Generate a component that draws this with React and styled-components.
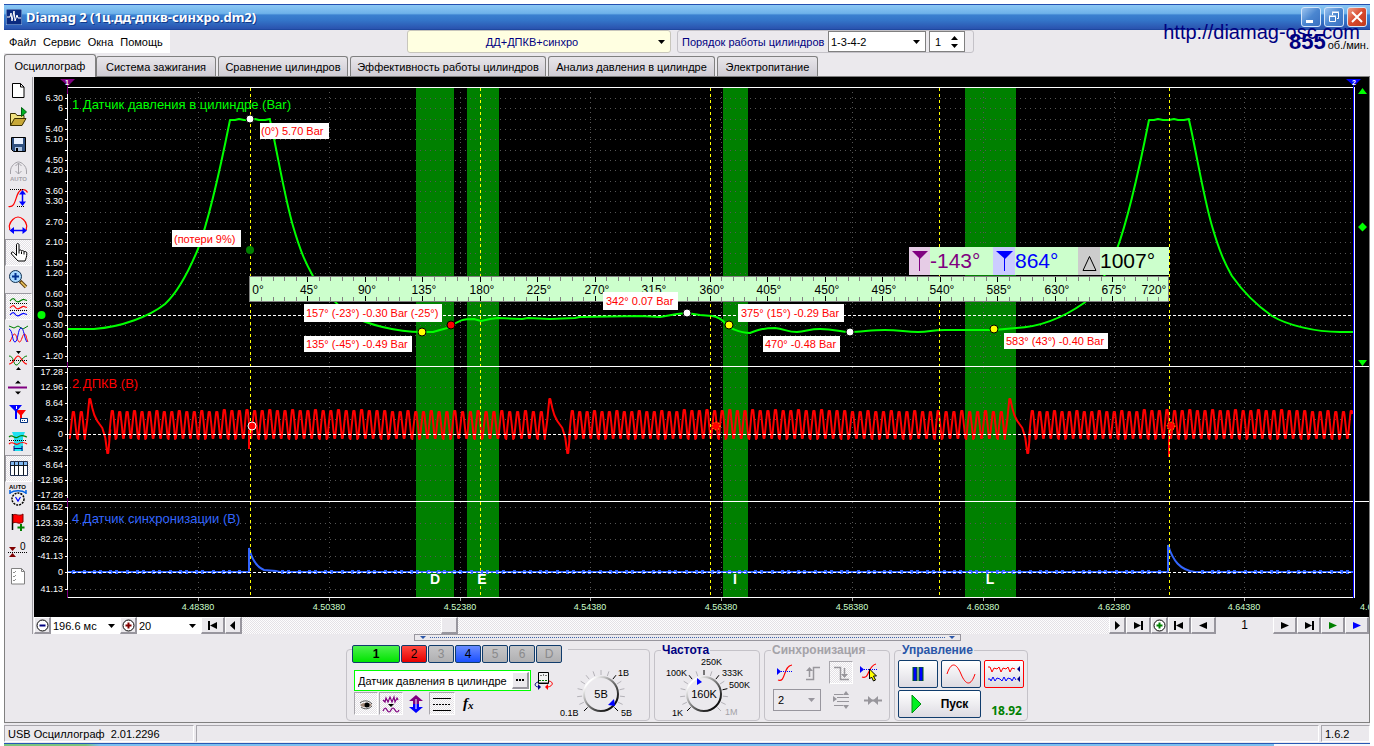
import React from 'react';
import styled, { createGlobalStyle, css } from 'styled-components';

const FACE = '#ebe9ed';
const hatch = css`
  background: repeating-conic-gradient(#e4e1e6 0% 25%, #fdfdfd 0% 50%) 0 0 / 2px 2px;
`;

const GlobalStyle = createGlobalStyle`
  * { box-sizing: border-box; }
  body {
    margin: 0;
    background: #fff;
    font-family: "Liberation Sans", Arial, sans-serif;
    font-size: 11px;
    color: #000;
  }
  button, select, input { font: inherit; color: inherit; margin: 0; }
  svg { display: block; flex: none; }
  svg text { font-family: "Liberation Sans", Arial, sans-serif; }
`;

/* ---------- window frame ---------- */

const Page = styled.div`
  position: relative;
  padding: 4px 4px 0;
  overflow: hidden;
`;

const TitleBar = styled.header`
  display: flex;
  align-items: center;
  height: 26px;
  padding: 0 3px 0 2px;
  border-top: 1px solid #2450b0;
  border-bottom: 1px solid #1e48a0;
  background: linear-gradient(#8cc8f4 0, #6eb2ea 35%, #3a80d0 42%, #3374c8 65%, #2a52ae 100%);
`;

const Title = styled.h1`
  flex: 1;
  margin: 0 0 0 4px;
  font: 700 13px "Noto Sans", sans-serif;
  line-height: 22px;
  white-space: nowrap;
  color: #fff;
  text-shadow: 1px 1px 0 #123a8c;
`;

const CaptionButton = styled.button`
  width: 20px;
  height: 20px;
  margin-left: 3px;
  padding: 0;
  border: 1px solid #d6e6fa;
  border-radius: 3px;
  background: ${(p) => (p.$close ? 'linear-gradient(135deg,#f0a08a,#d8482c 50%,#c03a1c)' : 'linear-gradient(135deg,#9cc4f0,#4a86d0 50%,#3a70c0)')};
`;

const SiteLink = styled.a`
  position: absolute;
  top: 21px;
  right: 14px;
  font-size: 20px;
  line-height: 22px;
  color: #000080;
  text-decoration: none;
`;

const HeaderRow = styled.div`
  display: flex;
  height: 24px;
  background: ${FACE};
`;

const Menu = styled.nav`
  display: flex;
  align-items: center;
  gap: 7px;
  width: 166px;
  height: 23px;
  padding-left: 5px;
  background: #fff;
`;

const MenuItem = styled.button`
  padding: 0;
  border: 0;
  background: none;
`;

const SelectBox = styled.div`
  position: relative;
  width: ${(p) => p.$w}px;
  height: ${(p) => p.$h || 22}px;
  flex: none;
  border: ${(p) => p.$border || '1px solid #808080'};
  border-radius: ${(p) => p.$radius || 0}px;
  background: ${(p) => p.$bg || '#fff'};
  select {
    appearance: none;
    width: 100%;
    height: 100%;
    padding: 0 16px 0 ${(p) => p.$pad || 2}px;
    border: 0;
    background: none;
    font-size: 11px;
    color: ${(p) => p.$color || '#000'};
    text-align: ${(p) => (p.$center ? 'center' : 'left')};
    text-align-last: ${(p) => (p.$center ? 'center' : 'left')};
  }
  svg {
    position: absolute;
    right: 5px;
    top: calc(50% - 2px);
    pointer-events: none;
  }
`;

const ModeSlot = styled.div`
  margin: 0 6px 0 237px;
`;

const OrderGroup = styled.div`
  display: flex;
  align-items: center;
  height: 23px;
  width: 297px;
  padding-left: 4px;
  border: 1px solid #c4c2c8;
  border-radius: 3px;
`;

const OrderLabel = styled.label`
  width: 146px;
  color: #000080;
  white-space: nowrap;
`;

const Spinner = styled.div`
  display: flex;
  align-items: center;
  width: 36px;
  height: 21px;
  margin-left: 3px;
  border: 1px solid #808080;
  background: #fff;
  input { width: 18px; padding: 0 0 0 5px; border: 0; background: none; outline: 0; }
`;

const Rpm = styled.div`
  display: flex;
  align-items: baseline;
  gap: 2px;
  margin-left: auto;
  padding-right: 1px;
  font-size: 11px;
  line-height: 24px;
  white-space: nowrap;
  b { font-size: 22px; color: #000080; }
`;

const Tabs = styled.div`
  display: flex;
  align-items: flex-end;
  gap: 2px;
  height: 23px;
  border-bottom: 1px solid #808080;
  background: ${FACE};
`;

const Tab = styled.button`
  height: ${(p) => (p.$active ? 23 : 20)}px;
  margin-bottom: ${(p) => (p.$active ? -1 : 0)}px;
  margin-right: ${(p) => (p.$active ? -2 : 0)}px;
  width: ${(p) => p.$w}px;
  padding: 0;
  border: 1px solid #808080;
  border-bottom: 0;
  border-radius: 3px 3px 0 0;
  white-space: nowrap;
  background: ${(p) => (p.$active ? FACE : 'linear-gradient(#e8e6ea, #cfccd4)')};
`;

/* ---------- main area ---------- */

const Workspace = styled.main`
  display: flex;
  background: ${FACE};
  border-left: 1px solid #808080;
  border-bottom: 1px solid #808080;
  border-right: 1px solid #808080;
`;

const ToolColumn = styled.div`
  display: flex;
  flex-direction: column;
  width: 29px;
  flex: none;
`;

const ToolList = styled.div`
  display: flex;
  flex-direction: column;
  height: 557px;
  border-right: 1px solid #a09ea4;
  margin-right: 1px;
`;

const ToolButton = styled.button`
  width: 27px;
  height: 27px;
  padding: 0;
  border: 1px solid transparent;
  background: none;
  ${(p) => p.$pressed && css`
    ${hatch}
    border-color: #9a98a0 #fff #fff #9a98a0;
  `}
  svg { margin: -1px; }
`;

const ChartColumn = styled.div`
  flex: 1;
  min-width: 0;
`;

const Chart = styled.svg`
  width: 100%;
  background: #000;
`;

const ScrollRow = styled.div`
  display: flex;
  height: 17px;
`;

const FlatButton = styled.button`
  display: flex;
  align-items: center;
  justify-content: center;
  flex: none;
  width: ${(p) => p.$w}px;
  height: 17px;
  padding: 0;
  border: 1px solid #fff;
  border-right: 2px solid #98969e;
  border-bottom: 2px solid #98969e;
  background: ${FACE};
`;

const Track = styled.div`
  flex: 1;
  ${hatch}
`;

const Thumb = styled.div`
  width: 17px;
  height: 17px;
  margin-left: 23%;
  border: 1px solid #fff;
  border-right: 2px solid #98969e;
  border-bottom: 2px solid #98969e;
  background: ${FACE};
`;

const PageNumber = styled.div`
  width: 57px;
  text-align: center;
  line-height: 17px;
  font-size: 12px;
`;

const LowerArea = styled.section`
  display: flex;
  flex-direction: column;
  align-items: center;
  height: 88px;
  margin-left: -29px;
`;

const Splitter = styled.div`
  display: flex;
  align-items: center;
  justify-content: space-between;
  width: 547px;
  height: 7px;
  padding: 0 5px;
  border: 1px solid #98969e;
  span { flex: 1; margin: 0 4px; border-top: 1px dotted #3a60a8; }
`;

const Panels = styled.div`
  display: flex;
  gap: 4px;
  padding-top: 3px;
`;

const Group = styled.fieldset`
  min-width: 0;
  width: ${(p) => p.$w}px;
  height: 77px;
  margin: 0;
  padding: 0;
  border: 1px solid #c4c2c8;
  border-radius: 4px;
`;

const Legend = styled.legend`
  height: 12px;
  margin-left: 6px;
  padding: 0 1px;
  font: 700 12px "Liberation Sans", Arial, sans-serif;
  line-height: 12px;
  color: ${(p) => p.$color};
`;

const ChannelGroup = styled.div`
  width: 304px;
  height: 72px;
  margin-top: 5px;
  border: 1px solid #c4c2c8;
  border-radius: 4px;
`;

const ChannelTabs = styled.div`
  display: flex;
  gap: 1px;
  width: 216px;
  margin: -5px 0 0 5px;
  background: ${FACE};
`;

const channelFill = {
  green: 'linear-gradient(#4ef04e, #00e400)',
  red: 'linear-gradient(#ff4a40, #e60000)',
  blue: 'linear-gradient(#6a8cff, #1a50ff)',
  off: 'linear-gradient(#c6c6c8, #b0b0b2)',
};

const ChannelButton = styled.button`
  width: ${(p) => (p.$wide ? 48 : 26)}px;
  height: 18px;
  padding: 0;
  border: 1px solid #103c6c;
  border-radius: 2px;
  background: ${(p) => channelFill[p.$tone]};
  font-size: 12px;
  font-weight: ${(p) => (p.$wide ? 700 : 400)};
  color: ${(p) => (p.$tone === 'off' ? '#8a8a8c' : '#000')};
`;

const ChannelBody = styled.div`
  display: flex;
`;

const ChannelLeft = styled.div`
  width: 208px;
  padding: 7px 0 0 7px;
`;

const Line = styled.div`
  display: flex;
  align-items: center;
  gap: ${(p) => p.$gap || 0}px;
  padding: ${(p) => p.$pad || 0};
`;

const SensorBox = styled.div`
  display: flex;
  align-items: center;
  width: 177px;
  height: 21px;
  border: 1px solid #00ff00;
  background: #fff;
  input { flex: 1; min-width: 0; padding: 0 3px; border: 0; background: none; outline: 0; }
`;

const DotsButton = styled.button`
  width: 17px;
  height: 17px;
  margin-right: 1px;
  padding: 0;
  border: 1px solid #fff;
  border-right: 2px solid #98969e;
  border-bottom: 2px solid #98969e;
  background: ${FACE};
  line-height: 8px;
  font-weight: 700;
  svg { margin: 0 auto; }
`;

const SmallTool = styled.button`
  width: ${(p) => p.$w || 24}px;
  height: 23px;
  padding: 0;
  border: 1px solid transparent;
  background: none;
  ${(p) => p.$pressed && css`
    ${hatch}
    border-color: #a8a6ac #fff #fff #a8a6ac;
  `}
  svg { margin: 0 auto; }
`;

const SyncGrid = styled.div`
  padding: 5px 4px 0 8px;
`;

const ControlGrid = styled.div`
  display: grid;
  grid-template-columns: 40px 40px 40px;
  grid-auto-rows: 28px;
  gap: 2px 3px;
  padding: 4px 0 0 3px;
`;

const ControlButton = styled.button`
  display: flex;
  align-items: center;
  justify-content: center;
  grid-column: span ${(p) => p.$span || 1};
  gap: 18px;
  padding: 0;
  border: 1px solid ${(p) => (p.$on ? '#ff0000' : '#103c6c')};
  border-radius: 2px;
  background: linear-gradient(#fff, #dddbe2);
  font-size: 12px;
  font-weight: 700;
`;

const Reading = styled.output`
  align-self: end;
  justify-self: end;
  padding-right: 2px;
  font: 700 12px "Noto Sans", sans-serif;
  line-height: 15px;
  color: #008000;
`;

const StatusBar = styled.footer`
  display: flex;
  gap: 2px;
  padding: 2px 0 1px;
  background: ${FACE};
`;

const StatusPane = styled.div`
  ${(p) => (p.$w ? `width: ${p.$w}px;` : 'flex: 1;')}
  height: 17px;
  padding-left: 3px;
  border: 1px solid #a8a6ac;
  border-right-color: #fff;
  border-bottom-color: #fff;
  line-height: 16px;
  white-space: pre;
`;

const TaskStrip = styled.div`
  height: 4px;
  border-top: 1px solid #2858b4;
  background: linear-gradient(90deg, #7cc47c 0 6%, #7cc0ef 7% 93%, #f4f8fc 93% 100%);
`;

/* ---------- glyphs ---------- */

const Caret = () => (
  <svg width="7" height="4" viewBox="0 0 7 4"><path d="M0 0h7L3.500 4z" fill="#000" /></svg>
);

const Ico = ({ children, s = 27, h }) => (
  <svg width={s} height={h || s} viewBox={`0 0 ${s} ${h || s}`} fill="none" strokeWidth="1">{children}</svg>
);

const wave = (y, c) => <path d={`M5 ${y}q3-4 5-1t5 1t4-1.500t3 1`} stroke={c} strokeWidth="1.200" />;

const tools = [
  ['Новый', <Ico><path d="M7.500 6.500h8l3.500 3.500v10.500H7.500z" fill="#fff" stroke="#000" /><path d="M15.500 6.500v3.500h3.500" stroke="#000" /></Ico>],
  ['Открыть', <Ico><path d="M5.500 21.500V9.500h5l1.500 2h7v3" fill="#f0e080" stroke="#3c3000" /><path d="M5.500 21.500l4-7h11.500l-4 7z" fill="#c8a838" stroke="#3c3000" /><path d="M16.500 3.500v9l5-4.500z" fill="#00b020" stroke="#006010" /></Ico>],
  ['Сохранить', <Ico><path d="M6.500 6.500h14v14h-12l-2-2z" fill="#305080" stroke="#000" /><path d="M9 7h9v6H9z" fill="#e8f0ff" /><path d="M10 16h7v4h-7z" fill="#a8c0e0" /><path d="M11 17h2v3h-2z" fill="#000" /></Ico>],
  ['Автомасштаб', <Ico><path d="M5.500 16v-3c0-5 5-9 8-9s8 4 8 9v3M13.500 5v11M10.500 8l3-3 3 3M10.500 13l3 3 3-3" stroke="#a4a2a8" /><text x="5" y="23" fontSize="6" fontWeight="700" fill="#a4a2a8">AUTO</text></Ico>],
  ['Масштаб по вертикали', <Ico><path d="M3.500 21.500c9 2 6-16 14-17 2 0 4 1 5 3" stroke="#f00" strokeWidth="1.200" /><path d="M5 4.500h13M12 21.500h8" stroke="#000" strokeDasharray="1 1" /><path d="M17.500 8v10" stroke="#00f" strokeWidth="1.500" /><path d="M17.500 5l3.500 4.500h-7zM17.500 21l3.500-4.500h-7z" fill="#00f" /></Ico>],
  ['Масштаб по горизонтали', <Ico><path d="M4.500 18c1-2-1-3 0-5 1-4 5-8 8.500-8s8 4 8.500 8c1 2-1 3 0 5" stroke="#f00" strokeWidth="1.200" /><path d="M8 18.500h11" stroke="#00f" strokeWidth="1.500" /><path d="M4.500 18.500l4.500-3.500v7zM22 18.500l-4.500-3.500v7z" fill="#00f" /></Ico>],
  ['Рука', <Ico><path d="M11.500 16.500V6c0-2 2.500-2 2.500 0v5.500c1-1 2.500-.500 2.500.500 1-.800 2.500-.300 2.500.800 1-.600 2.800-.200 2.800 1.400 0 3.500-.800 5.300-1.800 7.800h-7L6.500 15c-1-1.500 1-2.700 2.200-1.500z" fill="#fff" stroke="#000" /><path d="M14 11.500v3M16.500 12.500v2.500M19 13v2.500" stroke="#000" /></Ico>, true],
  ['Лупа', <Ico><path d="M15 15l6 6" stroke="#604010" strokeWidth="3.500" /><path d="M16 16l5 5" stroke="#f0c860" strokeWidth="1.500" /><circle cx="10.500" cy="10.500" r="6" fill="#a8d8ff" stroke="#103050" /><path d="M10.500 7v7M7 10.500h7" stroke="#003090" strokeWidth="2" /></Ico>],
  ['Раздельно', <Ico>{wave(8, '#008000')}<path d="M5 10.500h17M5 17.500h17" stroke="#000" strokeDasharray="1 1" />{wave(15, '#f00')}{wave(22, '#00f')}</Ico>, true],
  ['Совместно', <Ico><path d="M4 6l5 2 4-2 5 3 5-3" stroke="#008000" /><path d="M4.500 22c2-2 3-8 5-8s3 8 5 8 3-8 5-8 2 6 3.500 8" stroke="#f00" /><path d="M4 9c4 1 3 13 6 13s3-14 6-14 3 10 6 14" stroke="#00f" /></Ico>],
  ['Сдвиг', <Ico><path d="M4 9c5 0 4 8 7 9s6-9 11-9" stroke="#008000" /><path d="M4 17c5 0 6-8 9-8s5 8 9 8" stroke="#f00" strokeWidth="1.200" /><path d="M5 13.500h17" stroke="#000" strokeDasharray="1 1" /><path d="M11 4h5l-2.500 3zM11 23h5l-2.500-3z" fill="#000" /></Ico>],
  ['Уровень', <Ico><path d="M3 13.500h19" stroke="#800080" strokeWidth="2" /><path d="M10 9.500h6l-3-3zM10 17.500h6l-3 3z" fill="#000" /></Ico>],
  ['Маркеры', <Ico><path d="M10 9h11l-4 5v5h-2v-5z" fill="#f00" /><path d="M4 4h13l-5 6v8h-2v-8z" fill="#00f" /><path d="M15.500 17.500h7v4h-7z" fill="#fff" stroke="#003080" /><path d="M17 19.500h4" stroke="#003080" strokeDasharray="1 1" /><path d="M11.500 5v3" stroke="#fff" /></Ico>],
  ['Интервал', <Ico><path d="M7 4h13l-2 5v14H9V9z" fill="#20e0f0" /><path d="M4 9c4-4 5 3 9 0s6-1 9 0" stroke="#008000" strokeWidth="1.200" /><path d="M4 16c4-4 6 2 9 0s6-2 9 0" stroke="#f00" strokeWidth="1.200" /><path d="M4 12.500h18" stroke="#000" strokeDasharray="1 1" /><path d="M9 20.500h8M9 18v5M17 18v5" stroke="#001080" /></Ico>],
  ['Таблица', <Ico><path d="M5.500 6.500h17v14h-17z" fill="#fff" stroke="#203050" /><path d="M6 7h16v3H6z" fill="#80b8f0" /><path d="M5 10.500h18M9.500 7v13M13.500 7v13M18.500 7v13" stroke="#101820" /></Ico>, true],
  ['Авто', <Ico><text x="4" y="7" fontSize="6" fontWeight="700" fill="#000">AUTO</text><path d="M5 11c4-3 12-3 16 0M5 12V8M21 12V8" stroke="#0060e0" strokeWidth="1.500" /><circle cx="13" cy="17" r="6" fill="#eee" stroke="#000" strokeWidth="1.500" strokeDasharray="2 1" /><path d="M10.500 15l2.500 4 2.500-4" stroke="#00f" strokeWidth="1.200" /></Ico>],
  ['Флаг', <Ico><path d="M7.500 5v16" stroke="#000" strokeWidth="1.500" /><path d="M8 6c3-2 6 2 10-1v8c-4 3-7-1-10 1z" fill="#f00" stroke="#800000" /><path d="M16 15v7M12.500 18.500h7" stroke="#008000" strokeWidth="2" /></Ico>],
  ['Ноль', <Ico><path d="M4 11h7l-3.500 4zM4 21h7l-3.500-4z" fill="#800000" /><path d="M3 16.500h19" stroke="#000" strokeDasharray="1 1" /><text x="15" y="14" fontSize="10" fill="#000">0</text></Ico>],
  ['Список', <Ico><path d="M6.500 5.500h10l3 3v12.500h-13z" fill="#fff" stroke="#808080" /><path d="M8 9l1 1 2-2M8 13l1 1 2-2M8 17l1 1 2-2" stroke="#909090" /><path d="M16.500 5.500v3h3" stroke="#808080" /></Ico>],
];

const arrows = {
  right: 'M5 0l5 4.500-5 4.500z',
  left: 'M9 0L4 4.500 9 9z',
  end: 'M3 1l7 3.500L3 8zM10 0h2v9h-2z',
  start: 'M2 0h2v9H2zM11 1L4 4.500 11 8z',
  play: 'M3 1l8 3.500L3 8z',
  back: 'M11 1L3 4.500 11 8z',
};
const Arrow = ({ kind, fill = '#000' }) => (
  <svg width="14" height="9" viewBox="0 0 14 9"><path d={arrows[kind]} fill={fill} /></svg>
);
const Round = ({ plus, color }) => (
  <svg width="13" height="13" viewBox="0 0 13 13">
    <circle cx="6.500" cy="6.500" r="5.500" fill="#fff" stroke="#000" />
    <path d={plus ? 'M3.500 6.500h6M6.500 3.500v6' : 'M3.500 6.500h6'} stroke={color} strokeWidth="2" />
  </svg>
);

/* ---------- chart ---------- */

const LEFT = 68;
const RIGHT = 1353;
const bands = [[416, 38, 'D', 435], [467, 32, 'E', 482], [723, 25, 'I', 735], [965, 51, 'L', 990]];
const cursors = [250, 480, 710, 939, 1169];
const seconds = ['4.48380', '4.50380', '4.52380', '4.54380', '4.56380', '4.58380', '4.60380', '4.62380', '4.64380'];

const pressureLabels = [
  '6.30', '6', '', '5.40', '5.10', '', '4.50', '4.20', '', '3.60', '3.30', '', '2.70',
  '', '2.10', '', '1.50', '1.20', '', '0.60', '0.30', '0', '-0.30', '-0.60', '', '-1.20',
];
const pressureTicks = pressureLabels.map((label, i) => [Math.round(98 + i * 10.32), label]);
const crankTicks = [[372, '17.28'], [387, '12.96'], [403, '8.64'], [419, '4.32'], [434, '0'], [449, '-4.32'], [465, '-8.64'], [480, '-12.96'], [495, '-17.28']];
const syncTicks = [[507, '164.52'], [523, '123.39'], [539, '-82.26'], [556, '-41.13'], [572, '0'], [589, '41.13']];
const ticks = [...pressureTicks, ...crankTicks, ...syncTicks];

const riseFall = (o) =>
  `C${o + 178} 292 ${o + 188} 273 ${o + 198} 249 C${o + 208} 222 ${o + 221} 165 ${o + 230} 120 h5 l4-1 5 1 h6 l5-1 4 1 h6 l5-1 v1 C${o + 277} 150 ${o + 284} 195 ${o + 293} 226 S${o + 308} 267 ${o + 313} 276`;
const pressurePath =
  `M68 329H94C122 327 150 316 165 304 ${riseFall(0)}
   C320 286 332 302 352 316 C367 324 395 332 422 332 H433 L440 330 451 327 C458 320 464 319 474 319
   L481 321 490 319 498 318 522 319 528 318 550 319 575 318 580 317 640 316 660 317 677 314 687 313 700 315 712 316
   C724 317 726 327 733 329 C738 331 742 333 750 333 C758 330 763 328 775 328 C785 329 787 332 797 332
   C807 331 810 329 820 329 C835 329 840 332 850 332 C862 332 870 330 885 330 S905 332 918 332 930 330 945 330
   H994 L1016 328 C1040 327 1064 317 1084 303 ${riseFall(919)}
   C1239 286 1252 302 1272 316 C1287 325 1315 332 1340 332 H1353`;

function crankPath() {
  const pts = [];
  const tooth = (x, p, k) => {
    const top = 412 - (k % 3 === 0 ? 1 : 0) - (k > 14 && k < 36 ? 1 : 0);
    const bottom = 438 + (k % 4 === 0 ? 1 : 0);
    pts.push([x - p / 2 + 0.5, bottom], [x - 2.4, 428], [x - 1, top + 3], [x - 0.6, top], [x + 0.6, top], [x + 1, top + 3], [x + 2.4, 428], [x + p / 2 - 0.5, bottom]);
  };
  for (const s of [-369.7, 90.3, 550.3, 1010.3]) {
    pts.push([s - 3, 420], [s - 1, 399], [s, 399], [s + 2, 408], [s + 4, 415], [s + 7, 421], [s + 12, 428], [s + 15, 438], [s + 17, 453], [s + 18, 453], [s + 20, 430]);
    for (let n = 0; n <= 56; n += 1) {
      const x = s + 22 + 7.4 * n + 0.00466 * n * n;
      tooth(x, 7.4 + 0.0093 * n, n);
    }
  }
  return 'M' + pts.filter(([x]) => x >= LEFT && x <= RIGHT).map(([x, y]) => `${x.toFixed(1)} ${y}`).join('L');
}

const syncPath = 'M68 572H249V548C252 560 257 567 264 570L276 571 280 572H1168V545C1173 561 1180 570 1195 572H1353';
const noise = Array.from({ length: 150 }, (_, i) => 72 + i * 8.6 + ((i * 37) % 5)).filter((x) => x < RIGHT - 3 && Math.abs(x - 260) > 16 && Math.abs(x - 1180) > 20);

const notes = [
  [260, 123, 69, 16, '(0°) 5.70 Bar', 261],
  [172, 230, 69, 17, '(потери 9%)', 174],
  [304, 304, 138, 18, '157° (-23°) -0.30 Bar (-25°)', 306],
  [304, 336, 108, 16, '135° (-45°) -0.49 Bar', 306],
  [603, 292, 75, 18, '342° 0.07 Bar', 606],
  [738, 304, 106, 18, '375° (15°) -0.29 Bar', 741],
  [763, 336, 77, 16, '470° -0.48 Bar', 765],
  [1004, 333, 104, 16, '583° (43°) -0.40 Bar', 1006],
];
const dots = [[250, 119, '#fff'], [250, 250, '#008000'], [422, 332, '#ff0'], [451, 325, '#f00'], [687, 313, '#fff'], [729, 325, '#ff0'], [850, 332, '#fff'], [994, 329, '#ff0']];

function Scope() {
  const major = Array.from({ length: 17 }, (_, i) => i * 45);
  return (
    <Chart viewBox="34 77 1335 540" role="img" aria-label="Осциллограмма" fill="none">
      {bands.map(([x, w]) => <rect key={x} x={x} y="88" width={w} height="509" fill="#008000" />)}
      <g stroke="#555" strokeDasharray="1 4">
        {ticks.map(([y]) => <path key={y} d={`M70 ${y + 0.5}H${RIGHT}`} />)}
        {seconds.map((s, i) => <path key={s} d={`M${Math.round(198 + i * 130.8) + 0.5} 92V597`} />)}
      </g>
      <path d="M68 315.500H1353" stroke="#fff" strokeDasharray="3 2" />
      <path d={pressurePath} stroke="#00ff00" strokeWidth="2" strokeLinejoin="round" />
      <path d={crankPath()} stroke="#ff0000" strokeWidth="2" strokeLinejoin="round" />
      <path d="M249 430V449M1169 430V457" stroke="#ff0000" strokeWidth="2" />
      <path d={syncPath} stroke="#3366ff" strokeWidth="2" />
      <path d={noise.map((x) => `M${x.toFixed(0)} 572h3`).join('')} stroke="#3366ff" strokeWidth="4" />
      <path d="M68 434.500H1353M68 572.500H1353" stroke="#fff" strokeDasharray="3 2" />
      <path d={cursors.map((x) => `M${x + 0.5} 88V597`).join('')} stroke="#ffff00" strokeDasharray="3 3" />
      <path d="M68 87.500H1354M34 366.500H1369M34 501.500H1369M68 597.500H1354M67.500 88V598M1354.500 87V598" stroke="#fff" />
      <path d="M1353.500 84V598" stroke="#0000ff" />
      <path d="M67.500 84V94M67.500 362V368M67.500 498V508M67.500 590V598" stroke="#800080" />
      <path d={ticks.map(([y]) => `M65 ${y + 0.5}h3`).join('')} stroke="#fff" />
      <path d={seconds.map((_, i) => `M${Math.round(198 + i * 130.8) + 0.5} 598v3`).join('')} stroke="#aaa" />
      <g fill="#fff" fontSize="9" textAnchor="end">
        {ticks.filter(([, t]) => t).map(([y, t]) => <text key={y} x="63" y={y + 3}>{t}</text>)}
      </g>
      <g fill="#ccffcc" fontSize="9" textAnchor="middle">
        {seconds.map((s, i) => <text key={s} x={Math.round(198 + i * 130.8)} y="610">{s}</text>)}
        <text x="1360" y="610" textAnchor="start">4.66380</text>
      </g>
      <g fontSize="13">
        <text x="72" y="109" fill="#00ff00">1 Датчик давления в цилиндре (Bar)</text>
        <text x="72" y="388" fill="#ff0000">2 ДПКВ (В)</text>
        <text x="72" y="523" fill="#3366ff">4 Датчик синхронизации (В)</text>
      </g>
      <g fill="#fff" fontSize="14" fontWeight="700" textAnchor="middle">
        {bands.map(([x, , t, cx]) => <text key={x} x={cx} y="584">{t}</text>)}
      </g>

      <rect x="909" y="247" width="260" height="28" fill="#ccffcc" />
      <rect x="909" y="247" width="21" height="28" fill="#e6cce6" />
      <rect x="993" y="247" width="22" height="28" fill="#ccccff" />
      <rect x="1078" y="247" width="22" height="28" fill="#cccccc" />
      <path d="M912 251h16l-8 8z" fill="#800080" />
      <path d="M919.500 256V271" stroke="#800080" />
      <path d="M996 251h17l-8 8z" fill="#0000ff" />
      <path d="M1004.500 256V271" stroke="#0000ff" />
      <path d="M1089.500 256.500l6.500 14h-13z" stroke="#000" />
      <g fontSize="21">
        <text x="930" y="268" fill="#800080">-143°</text>
        <text x="1015" y="268" fill="#0000ff">864°</text>
        <text x="1100" y="268" fill="#000">1007°</text>
      </g>

      <rect x="249.500" y="276.500" width="919" height="25" fill="#ccffcc" stroke="#808080" />
      <path
        d={Array.from({ length: 79 }, (_, i) => `M${Math.round(261 + i * 11.5) + 0.5} 277v4m0 16v4`).join('')}
        stroke="#808080"
      />
      <path d={major.slice(1, 16).map((d) => `M${Math.round(250 + d * 1.277) + 0.5} 277v5m0 14v5`).join('')} stroke="#000" />
      <g fill="#000" fontSize="12" textAnchor="middle">
        {major.map((d) => (
          <text key={d} x={d === 0 ? 258 : d === 720 ? 1154 : Math.round(252 + d * 1.277)} y="294">{d}°</text>
        ))}
      </g>

      {notes.map(([x, y, w, h, t, tx]) => (
        <g key={t}>
          <rect x={x} y={y} width={w} height={h} fill="#fff" />
          <text x={tx} y={y + h / 2 + 4} fontSize="11" fill="#ff0000">{t}</text>
        </g>
      ))}
      {dots.map(([x, y, c]) => <circle key={`${x}-${y}`} cx={x} cy={y} r="4" fill={c} stroke="#000" strokeWidth={c === '#008000' ? 0 : 1} />)}
      <circle cx="252" cy="426" r="4" fill="#f00" stroke="#fff" />
      <circle cx="716" cy="426" r="4" fill="#f00" stroke="#ff0" strokeDasharray="1 2" />
      <circle cx="1171" cy="426" r="4" fill="#f00" stroke="#ff0" strokeDasharray="1 2" />
      <circle cx="41.500" cy="315" r="4" fill="#0f0" />
      <path d="M60 79h15l-7 7z" fill="#800080" />
      <path d="M1346 79h15l-7 7z" fill="#0000ff" />
      <g fill="#fff" fontSize="7" fontWeight="700" textAnchor="middle">
        <text x="67" y="85">1</text>
        <text x="1354" y="85">2</text>
      </g>
      <path d="M1358 94h9l-4.500-6zM1358 360h9l-4.500 6zM1358 227l4.500-4.500 4.500 4.500-4.500 4.500z" fill="#0f0" />
    </Chart>
  );
}

/* ---------- knobs ---------- */

const Knob = ({ cx, cy, value, labels, marks, pointer, width, height, id }) => (
  <svg width={width} height={height} viewBox={`0 0 ${width} ${height}`} fill="none">
    <defs>
      <linearGradient id={id} x1="0" y1="0" x2="1" y2="1">
        <stop offset=".15" stopColor="#fff" />
        <stop offset=".5" stopColor="#777" />
        <stop offset=".9" stopColor="#000" />
      </linearGradient>
    </defs>
    {Array.from({ length: 15 }, (_, i) => {
      const a = ((-225 + (270 / 14) * i) * Math.PI) / 180;
      const black = marks.includes(i);
      return <path key={i} d={`M${cx + 19 * Math.cos(a)} ${cy + 19 * Math.sin(a)}L${cx + 24 * Math.cos(a)} ${cy + 24 * Math.sin(a)}`} stroke={black ? '#000' : '#b4b2b8'} />;
    })}
    <circle cx={cx} cy={cy} r="17" fill="#ebe9ed" stroke={`url(#${id})`} strokeWidth="2" />
    <path d={pointer} fill="#0000ff" />
    <text x={cx} y={cy + 4} fontSize="11" fill="#000" textAnchor="middle">{value}</text>
    {labels.map(([x, y, t, c]) => <text key={t} x={x} y={y} fontSize="9" fill={c || '#000'}>{t}</text>)}
  </svg>
);

export default function App() {
  return (
    <Page>
      <GlobalStyle />
      <TitleBar>
        <svg width="16" height="16" viewBox="0 0 16 16" fill="none">
          <rect width="16" height="16" fill="#0a2a80" stroke="#a0c8f0" />
          <path d="M1 8h3l1-4 1 8 2-10 1 10 2-6 1 3h3" stroke="#fff" />
        </svg>
        <Title>Diamag 2 (1ц.дд-дпкв-синхро.dm2)</Title>
        <CaptionButton aria-label="Свернуть"><svg width="18" height="18"><path d="M4 12h7v3H4z" fill="#fff" /></svg></CaptionButton>
        <CaptionButton aria-label="Восстановить"><svg width="18" height="18" fill="none" stroke="#fff"><path d="M4.500 8.500h6v5h-6zM4 8h7M7.500 7V4.500h6v6H12M7 4h7" /></svg></CaptionButton>
        <CaptionButton $close aria-label="Закрыть"><svg width="18" height="18" stroke="#fff" strokeWidth="2"><path d="M4 4l10 10M14 4L4 14" /></svg></CaptionButton>
      </TitleBar>

      <HeaderRow>
        <Menu>
          {['Файл', 'Сервис', 'Окна', 'Помощь'].map((m) => <MenuItem key={m}>{m}</MenuItem>)}
        </Menu>
        <ModeSlot>
          <SelectBox $w={264} $h={23} $bg="#ffffe1" $border="1px solid #c8c6bc" $radius={3} $color="#000080" $center>
            <select aria-label="Режим"><option>ДД+ДПКВ+синхро</option></select>
            <Caret />
          </SelectBox>
        </ModeSlot>
        <OrderGroup>
          <OrderLabel htmlFor="order">Порядок работы цилиндров</OrderLabel>
          <SelectBox $w={98} $h={21}>
            <select id="order"><option>1-3-4-2</option></select>
            <Caret />
          </SelectBox>
          <Spinner>
            <input aria-label="Цилиндр" defaultValue="1" />
            <svg width="14" height="14" viewBox="0 0 14 14"><path d="M3 5h7L6.500 1zM3 9h7l-3.500 4z" fill="#000" /></svg>
          </Spinner>
        </OrderGroup>
        <Rpm><b>855</b> об./мин.</Rpm>
      </HeaderRow>

      <Tabs role="tablist">
        <Tab role="tab" $active $w={92}>Осциллограф</Tab>
        <Tab role="tab" $w={120}>Система зажигания</Tab>
        <Tab role="tab" $w={130}>Сравнение цилиндров</Tab>
        <Tab role="tab" $w={196}>Эффективность работы цилиндров</Tab>
        <Tab role="tab" $w={167}>Анализ давления в цилиндре</Tab>
        <Tab role="tab" $w={101}>Электропитание</Tab>
      </Tabs>

      <Workspace>
        <ToolColumn>
          <ToolList>
            {tools.map(([name, icon, pressed]) => <ToolButton key={name} aria-label={name} $pressed={pressed}>{icon}</ToolButton>)}
          </ToolList>
        </ToolColumn>
        <ChartColumn>
          <Scope />
          <ScrollRow>
            <FlatButton $w={17} aria-label="Уменьшить"><Round color="#000080" /></FlatButton>
            <SelectBox $w={69} $h={17} $border="0">
              <select aria-label="Развёртка"><option>196.6 мс</option></select>
              <Caret />
            </SelectBox>
            <FlatButton $w={17} aria-label="Увеличить"><Round plus color="#800000" /></FlatButton>
            <SelectBox $w={64} $h={17} $border="0">
              <select aria-label="Шаг"><option>20</option></select>
              <Caret />
            </SelectBox>
            <FlatButton $w={24} aria-label="В начало"><Arrow kind="start" /></FlatButton>
            <FlatButton $w={17} aria-label="Влево"><Arrow kind="left" /></FlatButton>
            <Track><Thumb /></Track>
            <FlatButton $w={17} aria-label="Вправо"><Arrow kind="right" /></FlatButton>
            <FlatButton $w={25} aria-label="В конец"><Arrow kind="end" /></FlatButton>
            <FlatButton $w={17} aria-label="Добавить"><Round plus color="#008000" /></FlatButton>
            <FlatButton $w={23} aria-label="Первый кадр"><Arrow kind="start" /></FlatButton>
            <FlatButton $w={25} aria-label="Предыдущий"><Arrow kind="back" /></FlatButton>
            <PageNumber>1</PageNumber>
            <FlatButton $w={24} aria-label="Следующий"><Arrow kind="play" /></FlatButton>
            <FlatButton $w={24} aria-label="Последний кадр"><Arrow kind="end" /></FlatButton>
            <FlatButton $w={24} aria-label="Воспроизвести"><Arrow kind="play" fill="#008000" /></FlatButton>
            <FlatButton $w={24} aria-label="Далее"><Arrow kind="play" fill="#0000ff" /></FlatButton>
          </ScrollRow>
          <LowerArea>
            <Splitter>
              <svg width="6" height="3"><path d="M0 0h6L3 3z" fill="#2a56a8" /></svg>
              <span />
              <svg width="6" height="3"><path d="M0 0h6L3 3z" fill="#2a56a8" /></svg>
            </Splitter>
            <Panels>
              <ChannelGroup>
                <ChannelTabs>
                  <ChannelButton $wide $tone="green">1</ChannelButton>
                  <ChannelButton $tone="red">2</ChannelButton>
                  <ChannelButton $tone="off">3</ChannelButton>
                  <ChannelButton $tone="blue">4</ChannelButton>
                  <ChannelButton $tone="off">5</ChannelButton>
                  <ChannelButton $tone="off">6</ChannelButton>
                  <ChannelButton $tone="off">D</ChannelButton>
                </ChannelTabs>
                <ChannelBody>
                  <ChannelLeft>
                    <Line $gap={3}>
                      <SensorBox>
                        <input aria-label="Датчик" defaultValue="Датчик давления в цилиндре" />
                        <DotsButton aria-label="Выбрать"><svg width="9" height="2"><path d="M0 0h2v2H0zM3 0h2v2H3zM6 0h2v2H6z" fill="#000" /></svg></DotsButton>
                      </SensorBox>
                      <svg width="20" height="20" viewBox="0 0 20 20" fill="none">
                        <path d="M4.500 1.500h10v11h-10z" fill="#f4f4f4" stroke="#000" />
                        <path d="M5 9.500h9" stroke="#008000" strokeDasharray="2 1" />
                        <path d="M5 11.500h9" stroke="#888" />
                        <path d="M7 5V4M9 4h1M12 4v1" stroke="#000" />
                        <path d="M4 11c-4 1-4 5 1 5" stroke="#000080" /><path d="M4 13l3 3-3 3z" fill="#000080" />
                        <path d="M15 10c5 1 4 5-1 6" stroke="#f00" /><path d="M14 13l-3 3 3 3z" fill="#f00" />
                      </svg>
                    </Line>
                    <Line $gap={1} $pad="1px 0 0 0">
                      <SmallTool $pressed aria-label="Видимость">
                        <Ico s={20}><path d="M4 9c3-3 9-3 12 1M5 13c4 3 8 2 11-1" stroke="#555" /><path d="M4 11c3-3 9-3 12 0-3 3-9 3-12 0z" fill="#a08878" /><circle cx="11" cy="11" r="2.500" fill="#000" /></Ico>
                      </SmallTool>
                      <SmallTool $pressed aria-label="Сглаживание">
                        <Ico s={20}><path d="M2 6l2 2 1-4 2 4 2-5 2 5 2-5 1 5 2-4 1 2M2 17q2-5 4-1t4 0 4 0 4 0" stroke="#800080" strokeWidth="1.200" /><path d="M7 10h6l-3 3z" fill="#000" /></Ico>
                      </SmallTool>
                      <SmallTool aria-label="Инверсия">
                        <Ico s={20}><path d="M10 1l7 6h-4v4H7V7H3z" fill="#800080" /><path d="M10 19l7-6h-4v-3H7v3H3z" fill="#0000ff" /><path d="M10 5v10" stroke="#fff" /></Ico>
                      </SmallTool>
                      <SmallTool $pressed $w={26} aria-label="Линии">
                        <Ico s={20}><path d="M1 4.500h18M1 16.500h18" stroke="#000" /><path d="M1 10.500h18" stroke="#000" strokeDasharray="2 1" /></Ico>
                      </SmallTool>
                      <SmallTool aria-label="Функция">
                        <Ico s={20}><text x="5" y="14" fontSize="15" fontWeight="700" fontStyle="italic" fill="#000" style={{ fontFamily: '"Liberation Serif", serif' }}>f</text><text x="10" y="15" fontSize="11" fontWeight="700" fontStyle="italic" fill="#000" style={{ fontFamily: '"Liberation Serif", serif' }}>x</text></Ico>
                      </SmallTool>
                    </Line>
                  </ChannelLeft>
                  <Knob
                    id="gain" width={92} height={57} cx={46} cy={31} value="5В"
                    marks={[0, 9, 14]}
                    pointer="M53 42l6-6 1 7z"
                    labels={[[5, 53, '0.1В'], [63, 13, '1В'], [66, 53, '5В']]}
                  />
                </ChannelBody>
              </ChannelGroup>

              <Group $w={106}>
                <Legend $color="#000080">Частота</Legend>
                <Knob
                  id="rate" width={103} height={62} cx={49} cy={38} value="160K"
                  marks={[0, 5, 7, 9, 11]}
                  pointer="M42 22v7l5-3z"
                  labels={[[11, 20, '100K'], [46, 9, '250K'], [67, 20, '333K'], [74, 32, '500K'], [17, 60, '1K'], [70, 59, '1M', '#a4a2a8']]}
                />
              </Group>

              <Group $w={126}>
                <Legend $color="#a4a2a8">Синхронизация</Legend>
                <SyncGrid>
                  <Line $gap={4}>
                    <SmallTool aria-label="Фронт">
                      <Ico s={20}><path d="M3 17c8 3 5-14 14-15" stroke="#f00" strokeWidth="1.200" /><path d="M6 8.500h12" stroke="#00f" strokeDasharray="1 1" /><path d="M2 5v7l4-3.500z" fill="#00f" /></Ico>
                    </SmallTool>
                    <SmallTool disabled aria-label="Нарастание">
                      <Ico s={20}><path d="M3 16.500h7.500V4.500H17M6.500 14V7" stroke="#98969c" strokeWidth="1.500" /><path d="M3 8h7L6.500 4z" fill="#98969c" /></Ico>
                    </SmallTool>
                    <SmallTool $pressed disabled aria-label="Спад">
                      <Ico s={20}><path d="M3 4.500h6.500v12H18M13.500 5v7" stroke="#98969c" strokeWidth="1.500" /><path d="M10 11h7l-3.500 4z" fill="#98969c" /></Ico>
                    </SmallTool>
                    <SmallTool aria-label="Уровень мышью">
                      <Ico s={20}><path d="M3 14c8 3 5-11 14-13" stroke="#f00" strokeWidth="1.200" /><path d="M5 6.500h14" stroke="#00f" strokeDasharray="1 1" /><path d="M1 3v7l4-3.500z" fill="#00f" /><path d="M10.500 6v10l2-2 2 4 2-1-2-4h3z" fill="#ff0" stroke="#000" /></Ico>
                    </SmallTool>
                  </Line>
                  <Line $gap={4} $pad="4px 0 0 0">
                    <SelectBox $w={48} $bg="transparent" $border="1px solid #98969e" $pad={4}>
                      <select aria-label="Канал синхронизации"><option>2</option></select>
                      <svg width="7" height="4" viewBox="0 0 7 4"><path d="M0 0h7L3.500 4z" fill="#98969e" /></svg>
                    </SelectBox>
                    <SmallTool disabled $w={32} aria-label="Гистерезис">
                      <Ico s={20}><path d="M2 6v6l4-3zM12 5h6l-3-4zM12 15h6l-3 4z" fill="#98969c" /><path d="M6 7.500h12M6 11.500h12M3 15.500h9M3 4.500h9" stroke="#98969c" /></Ico>
                    </SmallTool>
                    <SmallTool disabled aria-label="Сжать">
                      <Ico s={20}><path d="M5 6v9l5-4.500zM15 6v9l-5-4.500z" fill="#98969c" /><path d="M1 10.500h18" stroke="#98969c" strokeWidth="2" /></Ico>
                    </SmallTool>
                  </Line>
                </SyncGrid>
              </Group>

              <Group $w={134}>
                <Legend $color="#2a56a8">Управление</Legend>
                <ControlGrid>
                  <ControlButton aria-label="Пауза"><svg width="12" height="14"><path d="M1 0h4v14H1zM7 0h4v14H7z" fill="#0000ff" stroke="#006400" /></svg></ControlButton>
                  <ControlButton aria-label="Синусоида"><svg width="30" height="20" fill="none"><path d="M1 10C5-2 10-2 15 10s10 12 14 0" stroke="#f00" /></svg></ControlButton>
                  <ControlButton $on aria-label="Два сигнала">
                    <svg width="34" height="20" fill="none"><path d="M1 3h2l2 5 2-4 3 1 2-2 2 5 2-4 3 1 2-2 2 5 2-4 3 1" stroke="#f00" /><path d="M1 15h2l1 2 2-4 2 4 2-3 3 1 2 2 2-4 2 4 2-3 3 1 1 2 2-4 2 3" stroke="#00f" /><path d="M33 2v6l-3-3zM33 12v6l-3-3z" fill="#000080" /></svg>
                  </ControlButton>
                  <ControlButton $span={2}><svg width="12" height="18"><path d="M1 0l9 9-9 9z" fill="#00f020" stroke="#009010" /></svg>Пуск</ControlButton>
                  <Reading>18.92</Reading>
                </ControlGrid>
              </Group>
            </Panels>
          </LowerArea>
        </ChartColumn>
      </Workspace>

      <StatusBar>
        <StatusPane $w={190}>USB Осциллограф  2.01.2296</StatusPane>
        <StatusPane />
        <StatusPane $w={49}>1.6.2</StatusPane>
      </StatusBar>
      <TaskStrip />
      <SiteLink href="http://diamag-osc.com">http://diamag-osc.com</SiteLink>
    </Page>
  );
}
